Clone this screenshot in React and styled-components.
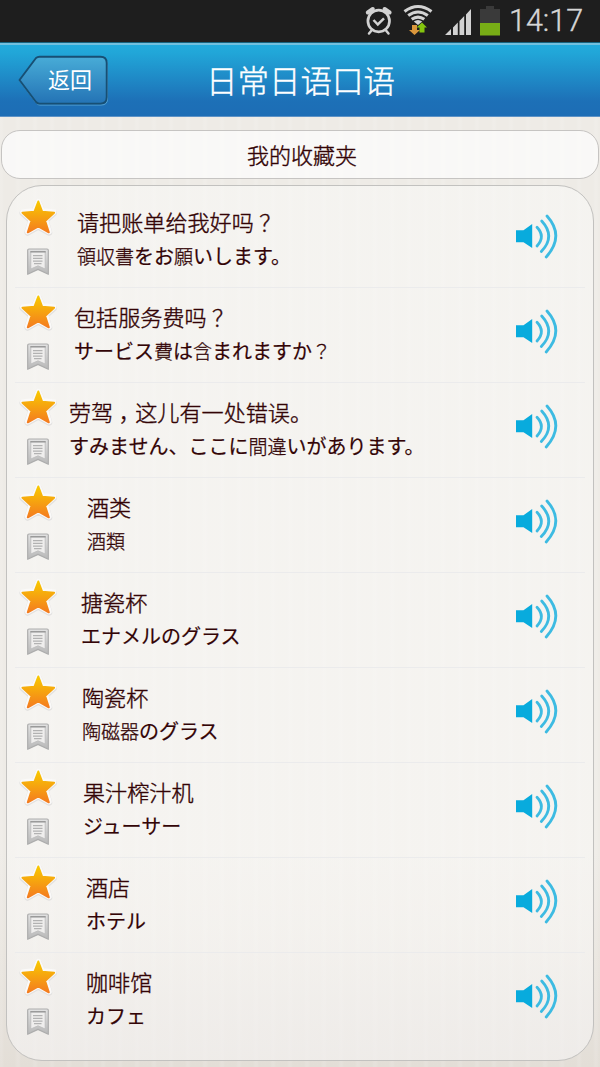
import React from 'react';
import styled, { createGlobalStyle } from 'styled-components';

const GlobalStyle = createGlobalStyle`
  * {
    box-sizing: border-box;
  }

  body {
    margin: 0;
    font-family: 'Noto Sans CJK SC', 'Noto Sans', sans-serif;
    background: #eeebe6;
  }

  svg {
    display: block;
  }
`;

const Screen = styled.div`
  display: flex;
  flex-direction: column;
  width: 600px;
  height: 1067px;
  overflow: hidden;
  background:
    repeating-linear-gradient(90deg, rgba(255, 255, 255, 0.1) 0 2px, rgba(255, 255, 255, 0) 4px 15px, rgba(255, 255, 255, 0.1) 17px),
    linear-gradient(#eeebe6 0%, #eeebe6 80%, #e3ded7 100%);
`;

const StatusBar = styled.div`
  display: flex;
  flex: none;
  height: 42px;
  padding-left: 364px;
  background: #1e1e1e;
`;

const Clock = styled.span`
  margin-left: 8px;
  font-family: Roboto, sans-serif;
  font-size: 30.5px;
  font-weight: 300;
  line-height: 42px;
  color: #d6d6d6;
  -webkit-text-stroke: 0.4px #d6d6d6;
`;

const Header = styled.header`
  display: grid;
  grid-template-columns: 110px 1fr 125px;
  align-items: center;
  flex: none;
  height: 75px;
  padding: 0 0 0 16px;
  border-top: 1px solid #17637f;
  border-bottom: 1px solid #5d92c6;
  background: linear-gradient(#72bfdd 0, #72bfdd 2px, #22aadb 2px, #21a6d8 10px, #1d70b7 58px, #1d6db5 100%);
`;

const BackButton = styled.button`
  display: grid;
  width: 94px;
  height: 54px;
  padding: 0;
  border: 0;
  background: none;
  color: #fff;
  font-family: inherit;

  > * {
    grid-area: 1 / 1;
  }
`;

const BackLabel = styled.span`
  padding-left: 32px;
  font-size: 22px;
  line-height: 51px;
  text-align: left;
  white-space: nowrap;
`;

const Title = styled.h1`
  margin: 0;
  padding: 0 0 2px;
  font-size: 31.5px;
  font-weight: 300;
  line-height: 44px;
  text-align: center;
  white-space: nowrap;
  color: #fff;
  -webkit-text-stroke: 0.4px #fff;
`;

const SectionTitle = styled.h2`
  flex: none;
  height: 49px;
  margin: 13px 1px 0;
  border: 1px solid #c6c4c2;
  border-radius: 19px;
  background: rgba(255, 255, 255, 0.66);
  font-size: 22px;
  font-weight: 300;
  line-height: 46px;
  text-indent: 4px;
  text-align: center;
  color: #330406;
  -webkit-text-stroke: 0.4px #330406;
`;

const List = styled.ul`
  flex: none;
  height: 876px;
  margin: 6px 6px 0;
  padding: 7px 8px 0;
  list-style: none;
  border: 1px solid #c2c1bf;
  border-radius: 36px;
  background: linear-gradient(rgba(250, 250, 248, 0.55), rgba(250, 249, 247, 0.6) 85%, rgba(243, 241, 240, 0.7));
`;

const Row = styled.li`
  display: flex;
  height: 95px;
  border-bottom: 1px solid #ebebec;

  &:last-child {
    border-bottom-color: transparent;
  }
`;

const Marks = styled.div`
  display: flex;
  flex-direction: column;
  align-items: center;
  gap: 8px;
  flex: none;
  width: 46px;
  padding-top: 3px;
`;

const Phrase = styled.div`
  flex: 1;
  padding-top: 12px;
  padding-left: ${props => props.$indent}px;
  color: #330406;
  white-space: nowrap;
`;

const Chinese = styled.p`
  margin: 0;
  font-size: 22.1px;
  font-weight: 300;
  line-height: 33px;
  -webkit-text-stroke: 0.4px #330406;
`;

// half-width punctuation padded so it sits in the middle of its cell
const Mark = styled.span`
  padding: 0 5.5px;
  font-feature-settings: 'halt';
`;

const Japanese = styled.p`
  margin: 0;
  font-family: 'Noto Sans CJK JP', sans-serif;
  font-size: 20px;
  font-weight: 400;
  line-height: 36px;
  -webkit-text-stroke: 0.2px #330406;
`;

const Kanji = styled.span`
  font-size: 19px;
  font-weight: 300;
  -webkit-text-stroke: 0.3px #330406;
`;

const Play = styled.button`
  flex: none;
  align-self: flex-start;
  margin: 19px 25px 0 0;
  padding: 0;
  border: 0;
  background: none;
`;

const phrases = [
  { zh: '请把账单给我好吗？', ja: '領収書をお願いします。', indent: 16 },
  { zh: '包括服务费吗？', ja: 'サービス費は含まれますか？', indent: 13 },
  { zh: '劳驾，这儿有一处错误。', ja: 'すみません、ここに間違いがあります。', indent: 8 },
  { zh: '酒类', ja: '酒類', indent: 26 },
  { zh: '搪瓷杯', ja: 'エナメルのグラス', indent: 20 },
  { zh: '陶瓷杯', ja: '陶磁器のグラス', indent: 21 },
  { zh: '果汁榨汁机', ja: 'ジューサー', indent: 22 },
  { zh: '酒店', ja: 'ホテル', indent: 25 },
  { zh: '咖啡馆', ja: 'カフェ', indent: 25 },
];

const splitMarks = text =>
  text.split(/([，？])/).map((part, i) => (i % 2 ? <Mark key={i}>{part}</Mark> : part));

// kanji are set lighter and a bit smaller than kana
const splitKanji = text =>
  text.split(/([\u4e00-\u9fff？]+)/).map((part, i) => (i % 2 ? <Kanji key={i}>{part}</Kanji> : part));

const StatusIcons = () => (
  <svg width="137" height="42" viewBox="364 0 137 42">
    <g fill="none" stroke="#d2d2d2">
      <circle cx="378.7" cy="21" r="10.8" strokeWidth="2.7" />
      <path d="M373.5 20l4.3 4.5 6.2-6.2" strokeWidth="2.5" />
      <path d="M371.5 30.5l-2.5 3M386 30.5l2.5 3" strokeWidth="2.5" strokeLinecap="round" />
      <path d="M367.8 12.5l5-3.5M389.6 12.5l-5-3.5" strokeWidth="4" strokeLinecap="round" />
      <path d="M404.5 11.5Q418 1.5 431.5 11.5M408.2 15.5Q418 8.5 427.8 15.5M411.7 19.3Q418 14.8 424.3 19.3" strokeWidth="3.1" />
    </g>
    <path d="M413.8 21.5q4.2-3 8.4 0L418 25z" fill="#d2d2d2" />
    <path d="M412 25h5v5h3l-5.5 5-5.5-5h3z" fill="#db973c" />
    <path d="M419.5 32.5v-5h-3l5.5-5 5 5h-2.5v5z" fill="#84c50e" />
    <path d="M445 35l6-6v6zM453 27.5l4.8-5V35H453zM459.5 21l4.7-5v19h-4.7zM466 14.5l5-5.5v26h-5z" fill="#d2d2d2" />
    <path d="M480 9h6V6h8v3h6v14h-20z" fill="#3a3a3a" />
    <path d="M480 23h20v12.5h-20z" fill="#78ad16" />
  </svg>
);

const BackShape = () => (
  <svg width="94" height="54" viewBox="16 52 94 54">
    <defs>
      <linearGradient id="back" x1="0" y1="0" x2="0" y2="1">
        <stop offset="0" stopColor="#48acd7" />
        <stop offset="1" stopColor="#2473b5" />
      </linearGradient>
    </defs>
    <path d="M20 80.5L36.5 58.5Q38 57 40 57H101Q107.5 57 107.5 63.5V98Q107.5 104 101 104H40Q38 104 36.5 102.5z" fill="none" stroke="#57a4d3" strokeWidth="1" />
    <path d="M19.5 79L36 57Q37.5 55.7 39.5 55.7H100.5Q106.7 55.7 106.7 62V96.3Q106.7 102.6 100.5 102.6H39.5Q37.5 102.6 36 101z" fill="url(#back)" stroke="#174f74" strokeWidth="1.9" strokeLinejoin="round" />
  </svg>
);

const Star = () => (
  <svg width="42" height="42" viewBox="17 196 42 42">
    <defs>
      <linearGradient id="star" x1="0" y1="0" x2="0" y2="1">
        <stop offset="0" stopColor="#f8c800" />
        <stop offset="1" stopColor="#f47c20" />
      </linearGradient>
    </defs>
    <path d="M38.3 202.5l4 9.5 11.5 1-8.5 7.5 3.7 12-10.7-6-10.7 6 3.7-12-8.5-7.5 11.5-1z" fill="#e2e1e0" stroke="#e2e1e0" strokeWidth="6.5" strokeLinejoin="round" />
    <path d="M38.3 201.5l4 9.5 11.5 1-8.5 7.5 3.7 12-10.7-6-10.7 6 3.7-12-8.5-7.5 11.5-1z" fill="#faf9f8" stroke="#faf9f8" strokeWidth="5.5" strokeLinejoin="round" />
    <path d="M38.3 201.5l3.8 10.2 12 1-9 8.2 3.7 11.4-10.5-6-10.5 6 3.7-11.4-9-8.2 12-1z" fill="url(#star)" stroke="url(#star)" strokeWidth="2" strokeLinejoin="round" />
  </svg>
);

const Bookmark = () => (
  <svg width="26" height="32" viewBox="25 246 26 32">
    <defs>
      <linearGradient id="ribbon" x1="0" y1="0" x2="0" y2="1">
        <stop offset="0" stopColor="#e2e2e2" />
        <stop offset="1" stopColor="#b8b8b8" />
      </linearGradient>
    </defs>
    <path d="M29 249h18q1.3 0 1.3 1.3v24L38 269.4l-10.3 4.9v-24q0-1.3 1.3-1.3z" fill="url(#ribbon)" stroke="#adadad" strokeWidth="1.2" strokeLinejoin="round" />
    <path d="M30.8 251.8h14.4V269L38 265.800 30.800 269z" fill="#efeeed" stroke="#bdbdbd" strokeWidth="0.9" />
    <path d="M30.3 251.8h15.4" stroke="#8e8e8e" strokeWidth="1.2" />
    <path d="M33 255.7h9.5M33 258.4h9.5M33 261.1h9.5M34 263.7h7.5" stroke="#b2b2b2" strokeWidth="1.2" />
  </svg>
);

const Speaker = () => (
  <svg width="46" height="48" viewBox="514 212 46 48">
    <path d="M516 230.3h7.5l8.7-6.3v24l-8.7-5.7H516z" fill="#08abdd" />
    <g fill="none" stroke="#3dbbe2" strokeWidth="2.8" strokeLinecap="round">
      <path d="M537 227.3Q545.8 236.5 537 246" />
      <path d="M541.7 221Q556 236.5 541.3 251.5" />
      <path d="M547 216Q565 236 546.2 257" />
    </g>
  </svg>
);

const App = () => (
  <Screen>
    <GlobalStyle />
    <StatusBar>
      <StatusIcons />
      <Clock>14:17</Clock>
    </StatusBar>
    <Header>
      <BackButton>
        <BackShape />
        <BackLabel>返回</BackLabel>
      </BackButton>
      <Title>日常日语口语</Title>
    </Header>
    <SectionTitle>我的收藏夹</SectionTitle>
    <List>
      {phrases.map(phrase => (
        <Row key={phrase.zh}>
          <Marks>
            <Star />
            <Bookmark />
          </Marks>
          <Phrase $indent={phrase.indent}>
            <Chinese>{splitMarks(phrase.zh)}</Chinese>
            <Japanese>{splitKanji(phrase.ja)}</Japanese>
          </Phrase>
          <Play aria-label="播放">
            <Speaker />
          </Play>
        </Row>
      ))}
    </List>
  </Screen>
);

export default App;
